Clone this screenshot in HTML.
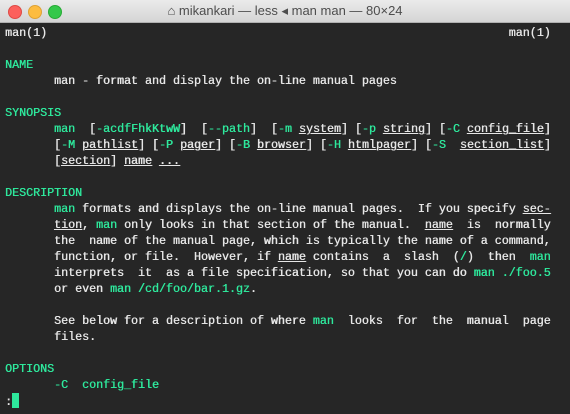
<!DOCTYPE html><html><head><style>
body{margin:0;width:570px;height:414px;overflow:hidden;background:#262626;font-family:"Liberation Mono",monospace}
.t{height:22px;background:linear-gradient(#ebebeb,#d5d5d5);border-bottom:1px solid #b0b0b0;position:relative;font-family:"Liberation Sans",sans-serif;font-size:13px;color:#4d4d4d;text-align:center;line-height:22px}
.d{position:absolute;top:5px;width:12px;height:12px;border-radius:50%}
pre{margin:0;position:absolute;top:25px;left:5px;font-size:11.67px;line-height:16px;color:#e6e6e6;font-family:"Liberation Mono",monospace;text-shadow:0.4px 0 0 currentColor}
b{color:#2ee89c;font-weight:normal}
u{text-decoration:underline}
.c{display:inline-block;width:7px;height:15px;background:#2ee89c;vertical-align:-3px}
</style></head><body>
<div class="t"><span class="d" style="left:8px;background:#fc605c;border:0.5px solid #de4a45"></span><span class="d" style="left:28px;background:#fdbc40;border:0.5px solid #dea235"></span><span class="d" style="left:48px;background:#34c84a;border:0.5px solid #27aa35"></span>⌂ mikankari — less ◂ man man — 80×24</div>
<pre>man(1)                                                                  man(1)

<b>NAME</b>
       man - format and display the on-line manual pages

<b>SYNOPSIS</b>
       <b>man</b>  [<b>-acdfFhkKtwW</b>]  [<b>--path</b>]  [<b>-m</b> <u>system</u>] [<b>-p</b> <u>string</u>] [<b>-C</b> <u>config_file</u>]
       [<b>-M</b> <u>pathlist</u>] [<b>-P</b> <u>pager</u>] [<b>-B</b> <u>browser</u>] [<b>-H</b> <u>htmlpager</u>] [<b>-S</b>  <u>section_list</u>]
       [<u>section</u>] <u>name</u> <u>...</u>

<b>DESCRIPTION</b>
       <b>man</b> formats and displays the on-line manual pages.  If you specify <u>sec-</u>
       <u>tion</u>, <b>man</b> only looks in that section of the manual.  <u>name</u>  is  normally
       the  name of the manual page, which is typically the name of a command,
       function, or file.  However, if <u>name</u> contains  a  slash  (<b>/</b>)  then  <b>man</b>
       interprets  it  as a file specification, so that you can do <b>man ./foo.5</b>
       or even <b>man /cd/foo/bar.1.gz</b>.

       See below for a description of where <b>man</b>  looks  for  the  manual  page
       files.

<b>OPTIONS</b>
       <b>-C</b>  <b>config_file</b>
:<span class="c"></span></pre>
</body></html>
